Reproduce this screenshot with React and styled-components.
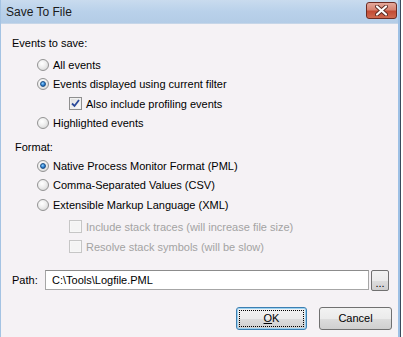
import React from 'react'
import styled, { createGlobalStyle } from "styled-components";

const Global = createGlobalStyle`
  html, body { margin: 0; padding: 0; background: #ffffff; }
  body { font-family: "Liberation Sans", Arial, sans-serif; font-size: 11px; color: #000; }
`

// 창 틀
const Frame = styled.div`
  width: 400px;
  height: 337px;
  box-sizing: border-box;
  display: flex;
  flex-direction: column;
  border-left: 1px solid #a4c3e3;
  border-right: 2px solid #9dc0e4;
  box-shadow: 1px 0 0 #3a4a5c;
  background: #f5f2f5;
`

const TitleBar = styled.div`
  height: 24px;
  flex: none;
  display: flex;
  align-items: center;
  justify-content: space-between;
  padding: 0 1px 0 5px;
  background: linear-gradient(#c9dbee, #b9d1ea 50%, #b3cce6);
  border-bottom: 1px solid #c6d6e8;
  box-sizing: border-box;
`

const Title = styled.div`
  font-family: "Liberation Sans", Arial, sans-serif;
  font-size: 12px;
  color: #1b1b1b;
`

const CloseButton = styled.div`
  width: 31px;
  height: 17px;
  margin-top: -3px;
  box-sizing: border-box;
  border: 1px solid #6d2b22;
  border-radius: 3px;
  background: linear-gradient(#e4a99c, #d78472 45%, #c24b34 55%, #cf6a50);
  display: flex;
  align-items: center;
  justify-content: center;
`

const Client = styled.div`
  flex: 1;
  display: flex;
  flex-direction: column;
  padding: 11px 6px 0 10px;
`

const Heading = styled.div`
  height: 16px;
  line-height: 16px;
  margin-left: ${p => p.indent}px;
  margin-top: ${p => p.top || 0}px;
`

const Options = styled.div`
  display: flex;
  flex-direction: column;
  margin-top: ${p => p.top}px;
`

const Row = styled.label`
  height: ${p => (p.tall ? 20 : 19.5)}px;
  margin-top: ${p => (p.gapBefore ? 2 : 0)}px;
  display: flex;
  align-items: center;
  gap: 4px;
  padding-left: ${p => p.indent}px;
  color: ${p => (p.disabled ? "#a3a3a3" : "#000")};
`

const RadioDot = styled.span`
  width: 12px;
  height: 12px;
  box-sizing: border-box;
  border-radius: 50%;
  border: 1px solid #939393;
  background: radial-gradient(circle at 40% 35%, #ffffff, #f0f0f0 40%, #cfcfcf);
  display: flex;
  align-items: center;
  justify-content: center;

  &::after {
    content: "";
    display: ${p => (p.checked ? "block" : "none")};
    width: 6px;
    height: 6px;
    border-radius: 50%;
    background: radial-gradient(circle at 40% 35%, #8fd0ff, #2a7fd1 55%, #0c3f80);
    border: 1px solid #1d4f86;
    box-sizing: border-box;
  }
`

const Box = styled.span`
  width: 13px;
  height: 13px;
  box-sizing: border-box;
  border: 1px solid ${p => (p.disabled ? "#c6c6c6" : "#8f8f8f")};
  background: ${p => (p.disabled ? "#f4f4f4" : "linear-gradient(135deg, #dcdcdc, #ffffff)")};
  box-shadow: inset 0 0 0 1px ${p => (p.disabled ? "#f7f7f7" : "#f0f0f0")};
  display: flex;
  align-items: center;
  justify-content: center;
`

const PathRow = styled.div`
  display: flex;
  align-items: center;
  margin-top: 12px;
  height: 22px;
`

const PathLabel = styled.span`
  width: 34px;
  flex: none;
  padding-left: 1px;
  box-sizing: border-box;
`

const Input = styled.div`
  width: 324px;
  height: 20px;
  box-sizing: border-box;
  border: 1px solid #a6a6a6;
  border-top-color: #8c8c8c;
  background: #fff;
  padding-left: 6px;
  display: flex;
  align-items: center;
`

const BrowseButton = styled.div`
  width: 18px;
  height: 21px;
  margin-left: 2px;
  margin-top: 1px;
  box-sizing: border-box;
  border: 1px solid #707070;
  border-radius: 2px;
  background: linear-gradient(#f2f2f2, #ebebeb 50%, #dddddd 51%, #cfcfcf);
  display: flex;
  align-items: flex-end;
  justify-content: center;
  line-height: 14px;
  font-size: 11px;
`

const Buttons = styled.div`
  display: flex;
  justify-content: flex-end;
  gap: 12px;
  margin-top: 16px;
`

const Button = styled.div`
  width: ${p => (p.wide ? 73 : 71)}px;
  height: 23px;
  box-sizing: border-box;
  border: 1px solid ${p => (p.focused ? "#3c7fb1" : "#707070")};
  border-radius: 3px;
  background: linear-gradient(#f2f2f2, #ebebeb 50%, #dddddd 51%, #cfcfcf);
  box-shadow: ${p => (p.focused ? "0 0 0 1px #9cd2f2 inset" : "none")};
  display: flex;
  align-items: center;
  justify-content: center;
  position: relative;
`

const FocusRing = styled.span`
  position: absolute;
  inset: 2px;
  border: 1px dotted #000;
`

function Radio({ checked, children }) {
  return (
    <Row indent={26}>
      <RadioDot checked={checked} />
      <span>{children}</span>
    </Row>
  )
}

function Check({ checked, disabled, gapBefore, children }) {
  return (
    <Row indent={58} disabled={disabled} tall={disabled} gapBefore={gapBefore}>
      <Box disabled={disabled}>
        {checked && (
          <svg width="9" height="9" viewBox="0 0 9 9">
            <path d="M1 4.5 L3.5 7 L8 1" fill="none" stroke="#2a4a9a" strokeWidth="1.8" />
          </svg>
        )}
      </Box>
      <span>{children}</span>
    </Row>
  )
}

export default function App() {
  return (
    <>
      <Global />
      <Frame>
        <TitleBar>
          <Title>Save To File</Title>
          <CloseButton>
            <svg width="13" height="11" viewBox="0 0 13 11">
              <path d="M2 1.5 L11 9.5 M11 1.5 L2 9.5" stroke="#5a2a22" strokeWidth="4" strokeLinecap="round" />
              <path d="M2 1.5 L11 9.5 M11 1.5 L2 9.5" stroke="#ffffff" strokeWidth="2.2" strokeLinecap="round" />
            </svg>
          </CloseButton>
        </TitleBar>
        <Client>
          <Heading indent={1}>Events to save:</Heading>
          <Options top={4}>
            <Radio>All events</Radio>
            <Radio checked>Events displayed using current filter</Radio>
            <Check checked>Also include profiling events</Check>
            <Radio>Highlighted events</Radio>
          </Options>
          <Heading indent={4} top={6}>Format:</Heading>
          <Options top={1}>
            <Radio checked>Native Process Monitor Format (PML)</Radio>
            <Radio>Comma-Separated Values (CSV)</Radio>
            <Radio>Extensible Markup Language (XML)</Radio>
            <Check disabled gapBefore>Include stack traces (will increase file size)</Check>
            <Check disabled>Resolve stack symbols (will be slow)</Check>
          </Options>
          <PathRow>
            <PathLabel>Path:</PathLabel>
            <Input>C:\Tools\Logfile.PML</Input>
            <BrowseButton>...</BrowseButton>
          </PathRow>
          <Buttons>
            <Button focused>
              <FocusRing />
              <span><u>O</u>K</span>
            </Button>
            <Button wide>Cancel</Button>
          </Buttons>
        </Client>
      </Frame>
    </>
  )
}
